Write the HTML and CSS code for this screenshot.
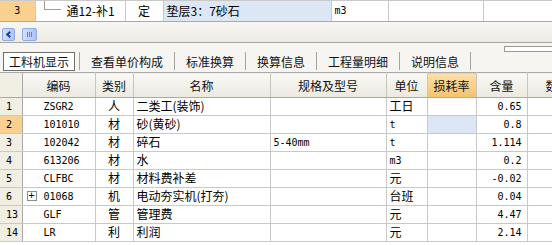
FILE: index.html
```html
<!DOCTYPE html>
<html lang="zh-CN">
<head>
  <meta charset="UTF-8" />
  <title>工料机显示</title>
  <link rel="stylesheet" href="styles.css">
</head>
<body>
  <table class="top-grid">
    <colgroup>
      <col style="width:35px"><col style="width:90px"><col style="width:38px">
      <col style="width:168px"><col style="width:57px"><col style="width:95px"><col style="width:69px">
    </colgroup>
    <tr>
      <td class="rn sel en">3</td>
      <td class="tree"><span class="branch"></span>通12-补1</td>
      <td class="center">定</td>
      <td class="cur">垫层3：7砂石</td>
      <td class="en">m3</td>
      <td></td>
      <td></td>
    </tr>
  </table>

  <div class="hscroll">
    <span class="sb-btn"><span class="arrow"></span></span>
    <span class="sb-thumb"><i></i><i></i><i></i></span>
  </div>

  <div class="splitter"><span class="mini-bar"></span></div>

  <div class="tabs">
    <div class="tab active"><span>工料机显示</span></div>
    <div class="tab"><span>查看单价构成</span></div>
    <div class="tab"><span>标准换算</span></div>
    <div class="tab"><span>换算信息</span></div>
    <div class="tab"><span>工程量明细</span></div>
    <div class="tab"><span>说明信息</span></div>
  </div>

  <table class="grid">
    <colgroup>
      <col style="width:22px"><col style="width:73px"><col style="width:38px"><col style="width:137px">
      <col style="width:116px"><col style="width:41px"><col style="width:49px"><col style="width:51px"><col style="width:73px">
    </colgroup>
    <thead>
      <tr>
        <th class="rn"></th>
        <th>编码</th>
        <th>类别</th>
        <th>名称</th>
        <th>规格及型号</th>
        <th>单位</th>
        <th class="hl">损耗率</th>
        <th>含量</th>
        <th class="cut">数量</th>
      </tr>
    </thead>
    <tbody>
      <tr><td class="rn en">1</td><td class="code en">ZSGR2</td><td class="center">人</td><td>二类工(装饰)</td><td></td><td>工日</td><td></td><td class="num en">0.65</td><td></td></tr>
      <tr><td class="rn sel en">2</td><td class="code en">101010</td><td class="center">材</td><td>砂(黄砂)</td><td></td><td class="en">t</td><td class="cur"></td><td class="num en">0.8</td><td></td></tr>
      <tr><td class="rn en">3</td><td class="code en">102042</td><td class="center">材</td><td>碎石</td><td class="en">5-40mm</td><td class="en">t</td><td></td><td class="num en">1.114</td><td></td></tr>
      <tr><td class="rn en">4</td><td class="code en">613206</td><td class="center">材</td><td>水</td><td></td><td class="en">m3</td><td></td><td class="num en">0.2</td><td></td></tr>
      <tr><td class="rn en">5</td><td class="code en">CLFBC</td><td class="center">材</td><td>材料费补差</td><td></td><td>元</td><td></td><td class="num en">-0.02</td><td></td></tr>
      <tr><td class="rn en">6</td><td class="code en"><span class="expand">+</span>01068</td><td class="center">机</td><td>电动夯实机(打夯)</td><td></td><td>台班</td><td></td><td class="num en">0.04</td><td></td></tr>
      <tr><td class="rn en">13</td><td class="code en">GLF</td><td class="center">管</td><td>管理费</td><td></td><td>元</td><td></td><td class="num en">4.47</td><td></td></tr>
      <tr><td class="rn en">14</td><td class="code en">LR</td><td class="center">利</td><td>利润</td><td></td><td>元</td><td></td><td class="num en">2.14</td><td></td></tr>
    </tbody>
  </table>
</body>
</html>
```

FILE: styles.css
```css
* {
  box-sizing: border-box;
}
body {
  margin: 0;
  width: 552px;
  height: 245px;
  overflow: hidden;
  background: #ffffff;
  color: #000000;
  font-family: "Noto Sans CJK SC", sans-serif;
  font-size: 12px;
}
table {
  border-collapse: collapse;
  table-layout: fixed;
}
td, th {
  padding: 0 3px;
  white-space: nowrap;
  overflow: hidden;
  font-weight: normal;
}
.center {
  text-align: center;
}
.en {
  font-family: "DejaVu Sans Mono", monospace;
  font-size: 10px;
}

/* upper grid */
.top-grid {
  width: 552px;
  background: #ffffff;
}
.top-grid tr {
  height: 21px;
}
.top-grid td {
  border-right: 1px solid #c9c9c9;
  border-top: 1px solid #c9c9c9;
  border-bottom: 1px solid #a9a9a9;
  line-height: 16px;
  padding-top: 0;
  padding-bottom: 0;
}
.top-grid .rn {
  text-align: center;
}
.tree {
  position: relative;
  padding-left: 31px;
}
.branch {
  position: absolute;
  left: 8px;
  top: 0;
  width: 17px;
  height: 9px;
  border-left: 1px solid #9c9c9c;
  border-bottom: 1px solid #9c9c9c;
}
.cur {
  background: #dde6f4;
}
.sel {
  background: #f9d08e;
}

/* horizontal scroll bar of the upper grid */
.hscroll {
  height: 20px;
  padding: 6px 0 0 2px;
  background: linear-gradient(#f8f7f3, #eceae3);
  line-height: 0;
}
.sb-btn,
.sb-thumb {
  display: inline-block;
  vertical-align: top;
  height: 13px;
  border: 1px solid #8eaaea;
  border-radius: 2px;
  background: linear-gradient(90deg, #d3e0fd, #adc3f6);
}
.sb-btn {
  width: 13px;
  margin-right: 4px;
  position: relative;
}
.arrow {
  position: absolute;
  left: 4px;
  top: 3px;
  width: 5px;
  height: 5px;
  border-left: 2px solid #22409a;
  border-bottom: 2px solid #22409a;
  transform: rotate(45deg);
}
.sb-thumb {
  width: 15px;
  padding: 3px 0 0 4px;
}
.sb-thumb i {
  display: inline-block;
  vertical-align: top;
  width: 1px;
  height: 5px;
  margin-right: 1px;
  background: #5f80d2;
}

/* splitter */
.splitter {
  height: 9px;
  border-top: 1px solid #a7a6a0;
  background: #f6f5f1;
  display: flex;
  justify-content: flex-end;
  padding-top: 3px;
}
.mini-bar {
  width: 48px;
  height: 6px;
  border: 1px solid #9b9a94;
  border-right: none;
  background: #ffffff;
}

/* tabs */
.tabs {
  height: 21px;
  display: flex;
  background: #f6f5f1;
}
.tab {
  padding: 0 11px;
  border-right: 1px solid #a6a59d;
  line-height: 19px;
  height: 18px;
  margin-top: 1px;
  color: #111111;
}
.tab.active {
  padding: 0 4px 0 3px;
}
.tab.active span {
  display: block;
  padding: 0 5px;
  border: 1px solid #6f6e68;
  background: #ffffff;
  line-height: 17px;
  height: 19px;
}

/* lower grid */
.grid {
  width: 600px;
  border-top: 1px solid #a9a9a9;
}
.grid thead tr {
  height: 25px;
}
.grid th {
  background: linear-gradient(#f9f8f4, #ebe9e0);
  border-right: 1px solid #c9c7bd;
  border-bottom: 1px solid #a9a9a9;
  text-align: center;
  color: #111111;
}
.grid th.hl {
  background: linear-gradient(#fde0a8, #f5c26f);
}
.grid th.cut {
  text-align: left;
  padding-left: 18px;
}
.grid tbody tr {
  height: 18px;
}
.grid td {
  border-right: 1px solid #c9c9c9;
  border-bottom: 1px solid #c9c9c9;
  line-height: 14px;
  padding-top: 1px;
  padding-bottom: 0;
  vertical-align: top;
}
.grid td.en {
  padding-top: 2px;
}
.grid td.rn,
.grid th.rn {
  background: #f1efe3;
  border-right: 1px solid #a9a9a9;
  padding-left: 6px;
}
.grid td.rn.sel {
  background: #f9d08e;
}
.grid td.code {
  padding-left: 21px;
  position: relative;
}
.expand {
  position: absolute;
  left: 4px;
  top: 3px;
  width: 10px;
  height: 10px;
  border: 1px solid #8d8d8d;
  line-height: 8px;
  font-size: 10px;
  text-align: center;
}
.grid td.num {
  text-align: right;
  padding-right: 5px;
}
```
